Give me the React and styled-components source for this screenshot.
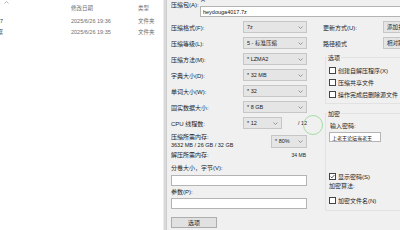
import React from 'react';
import styled, { createGlobalStyle } from 'styled-components';

const Global = createGlobalStyle`
  html, body { margin: 0; padding: 0; background: #fff; }
  body { font-family: "Liberation Sans", "Noto Sans CJK SC", sans-serif; }
  #root { width: 400px; height: 230px; overflow: hidden; }
`;

const Screen = styled.div`
  position: relative;
  display: flex;
  width: 400px;
  height: 230px;
  overflow: hidden;
`;

/* ---------- explorer ---------- */
const Explorer = styled.div`
  width: 163px;
  flex: none;
  background: #fff;
  color: #6e6e6e;
  font-size: 5.5px;
`;

const ExRow = styled.div`
  display: grid;
  grid-template-columns: 66px 67px 30px;
  height: ${p => p.$h}px;
  align-items: center;
  white-space: nowrap;
`;

const NameCell = styled.div`
  height: 100%;
  display: flex;
  align-items: ${p => (p.$top ? 'flex-start' : 'center')};
`;

const NameClip = styled.div`
  width: 3px;
  overflow: hidden;
  display: flex;
  justify-content: flex-end;
  color: #333;
`;

const Cell = styled.div`
  padding-left: 5px;
`;

const Caret = styled.svg`
  margin: 1px 0 0 4px;
`;

const Divider = styled.div`
  width: 2px;
  flex: none;
  background: #d9d9d9;
  border-left: 1px solid #ececec;
  border-right: 1px solid #cdcdcd;
`;

/* ---------- dialog ---------- */
const Dialog = styled.div`
  flex: 1;
  min-width: 0;
  background: #f0f0f0;
  padding-left: 4px;
  color: #222;
  font-size: 6px;
  overflow: hidden;
  white-space: nowrap;
`;

const TopRow = styled.div`
  display: flex;
  height: 17px;
`;

const ArchiveLabel = styled.div`
  width: 29px;
  flex: none;
  line-height: 8px;
  margin-top: 1px;
`;

const PathCol = styled.div`
  display: flex;
  flex-direction: column;
`;

const PathText = styled.div`
  height: 6px;
  line-height: 6px;
  margin-top: -3px;
  padding-left: 1px;
  color: #444;
`;

const TextBox = styled.div`
  box-sizing: border-box;
  width: ${p => p.$w}px;
  height: ${p => p.$h || 11}px;
  margin-top: ${p => p.$mt || 0}px;
  margin-left: ${p => p.$ml || 0}px;
  background: #fff;
  border: 1px solid #b4b4b4;
  display: flex;
  align-items: center;
  padding-left: 2px;
  overflow: hidden;
  font-size: ${p => p.$fs || 5.5}px;
  color: #111;
`;

const Main = styled.div`
  display: flex;
  gap: 16px;
`;

const LeftCol = styled.div`
  width: 136px;
  flex: none;
  display: flex;
  flex-direction: column;
`;

const FormGrid = styled.div`
  display: grid;
  grid-template-columns: 72px 64px;
  grid-auto-rows: 12px;
  row-gap: 4px;
  margin-top: 4px;
  align-items: center;
`;

const SelectBox = styled.div`
  box-sizing: border-box;
  width: ${p => p.$w || 64}px;
  height: ${p => p.$h || 12}px;
  flex: none;
  background: #e5e5e5;
  border: 1px solid #c6c6c6;
  display: flex;
  align-items: center;
  justify-content: space-between;
  padding: 0 3px;
  font-size: 5.5px;
  color: #222;
`;

const Chevron = () => (
  <svg width="5" height="3" viewBox="0 0 5 3">
    <polyline points="0.5,0.5 2.5,2.5 4.5,0.5" fill="none" stroke="#777" strokeWidth="0.7" />
  </svg>
);

const Select = ({ w, h, children }) => (
  <SelectBox $w={w} $h={h}>
    <span>{children}</span>
    <Chevron />
  </SelectBox>
);

const InlineCtl = styled.div`
  display: flex;
  align-items: center;
  gap: 16px;
  font-size: 5.5px;
`;

const MemoryRow = styled.div`
  display: flex;
  justify-content: space-between;
  align-items: center;
  margin-top: 4px;
  height: 16px;
`;

const MemLabel = styled.div`
  line-height: 8px;
  font-size: 6px;
`;

const Small = styled.span`
  font-size: 5.5px;
`;

const SplitRow = styled.div`
  display: flex;
  justify-content: space-between;
  align-items: center;
  height: 8px;
  margin-top: 1px;
`;

const Mb = styled.span`
  font-size: 5px;
  padding-top: 2px;
  padding-right: 1px;
`;

const FieldLabel = styled.div`
  line-height: 8px;
  margin-top: ${p => p.$mt || 0}px;
  padding-left: ${p => p.$pl || 0}px;
`;

const Button = styled.div`
  box-sizing: border-box;
  width: 46px;
  height: 11px;
  margin-top: 8px;
  background: #e1e1e1;
  border: 1px solid #adadad;
  display: flex;
  align-items: center;
  justify-content: center;
`;

const RightCol = styled.div`
  flex: 1;
  display: flex;
  flex-direction: column;
`;

const RightRow = styled.div`
  display: flex;
  align-items: center;
  height: 12px;
  margin-top: 4px;
`;

const RightLabel = styled.div`
  width: 60px;
  flex: none;
`;

const GroupBox = styled.div`
  display: flex;
  flex-direction: column;
  margin: ${p => p.$mt}px 0 0 2px;
  border: 1px solid #e2e2e2;
  border-right: none;
  padding-bottom: ${p => p.$pb}px;
`;

const Legend = styled.div`
  align-self: flex-start;
  line-height: 8px;
  margin: -4px 0 0 ${p => p.$ml || 1}px;
  padding: 0 1px;
  background: #f0f0f0;
`;

const CheckRow = styled.div`
  display: flex;
  align-items: center;
  gap: 2px;
  height: 12px;
  padding-left: 3px;
  margin-top: ${p => p.$mt || 0}px;
`;

const Box = styled.div`
  box-sizing: border-box;
  width: 7px;
  height: 7px;
  background: #fff;
  border: 1px solid #444;
  display: flex;
  align-items: center;
  justify-content: center;
`;

const Check = ({ checked, children, mt }) => (
  <CheckRow $mt={mt}>
    <Box>
      {checked && (
        <svg width="5" height="5" viewBox="0 0 5 5">
          <polyline points="0.6,2.6 1.9,3.9 4.4,1" fill="none" stroke="#333" strokeWidth="0.8" />
        </svg>
      )}
    </Box>
    <span>{children}</span>
  </CheckRow>
);

const CursorRing = styled.div`
  position: absolute;
  left: 303px;
  top: 115px;
  width: 20px;
  height: 20px;
  box-sizing: border-box;
  border: 1px solid #a5dca5;
  border-radius: 50%;
  pointer-events: none;
`;

const formRows = [
  ['压缩格式(F):', '7z'],
  ['压缩等级(L):', '5 - 标准压缩'],
  ['压缩方法(M):', '* LZMA2'],
  ['字典大小(D):', '* 32 MB'],
  ['单词大小(W):', '* 32'],
  ['固实数据大小:', '* 8 GB'],
];

export default function App() {
  return (
    <>
      <Global />
      <Screen>
        <Explorer>
          <ExRow $h={15}>
            <NameCell $top>
              <Caret width="5" height="3" viewBox="0 0 5 3">
                <polyline points="0.5,2.5 2.5,0.5 4.5,2.5" fill="none" stroke="#888" strokeWidth="0.6" />
              </Caret>
            </NameCell>
            <Cell>修改日期</Cell>
            <Cell>类型</Cell>
          </ExRow>
          <ExRow $h={11}>
            <NameCell><NameClip>资料7</NameClip></NameCell>
            <Cell>2025/6/26 19:36</Cell>
            <Cell>文件夹</Cell>
          </ExRow>
          <ExRow $h={11}>
            <NameCell><NameClip>新建框</NameClip></NameCell>
            <Cell>2025/6/26 19:35</Cell>
            <Cell>文件夹</Cell>
          </ExRow>
        </Explorer>
        <Divider />
        <Dialog>
          <TopRow>
            <ArchiveLabel>压缩包(A):</ArchiveLabel>
            <PathCol>
              <PathText>A</PathText>
              <TextBox $w={230} $mt={3}>heydouga4017.7z</TextBox>
            </PathCol>
          </TopRow>
          <Main>
            <LeftCol>
              <FormGrid>
                {formRows.map(([label, value]) => (
                  <React.Fragment key={label}>
                    <div>{label}</div>
                    <Select>{value}</Select>
                  </React.Fragment>
                ))}
                <div>CPU 线程数:</div>
                <InlineCtl>
                  <Select w={39}>* 12</Select>
                  <span>/ 12</span>
                </InlineCtl>
              </FormGrid>
              <MemoryRow>
                <MemLabel>
                  压缩所需内存:
                  <br />
                  <Small>3632 MB / 26 GB / 32 GB</Small>
                </MemLabel>
                <Select w={36} h={13}>* 80%</Select>
              </MemoryRow>
              <SplitRow>
                <span>解压所需内存:</span>
                <Mb>34 MB</Mb>
              </SplitRow>
              <FieldLabel $mt={6}>分卷大小，字节(V):</FieldLabel>
              <TextBox $w={136} $mt={3} />
              <FieldLabel $mt={2}>参数(P):</FieldLabel>
              <TextBox $w={136} $mt={2} />
              <Button>选项</Button>
            </LeftCol>
            <RightCol>
              <RightRow>
                <RightLabel>更新方式(U):</RightLabel>
                <Select w={70}>添加并替换文件</Select>
              </RightRow>
              <RightRow>
                <RightLabel>路径模式</RightLabel>
                <Select w={70}>相对路径</Select>
              </RightRow>
              <GroupBox $mt={8} $pb={3}>
                <Legend $ml={1}>选项</Legend>
                <Check mt={2}>创建自解压程序(X)</Check>
                <Check>压缩共享文件</Check>
                <Check>操作完成后删除源文件</Check>
              </GroupBox>
              <GroupBox $mt={9} $pb={4}>
                <Legend $ml={1}>加密</Legend>
                <FieldLabel $mt={4} $pl={4}>输入密码:</FieldLabel>
                <TextBox $w={52} $h={10} $mt={2} $ml={3} $fs={5}>上老王论坛当老王</TextBox>
                <Check checked mt={28}>显示密码(S)</Check>
                <FieldLabel $pl={3}>加密算法:</FieldLabel>
                <Check mt={4}>加密文件名(N)</Check>
              </GroupBox>
            </RightCol>
          </Main>
        </Dialog>
        <CursorRing />
      </Screen>
    </>
  );
}
